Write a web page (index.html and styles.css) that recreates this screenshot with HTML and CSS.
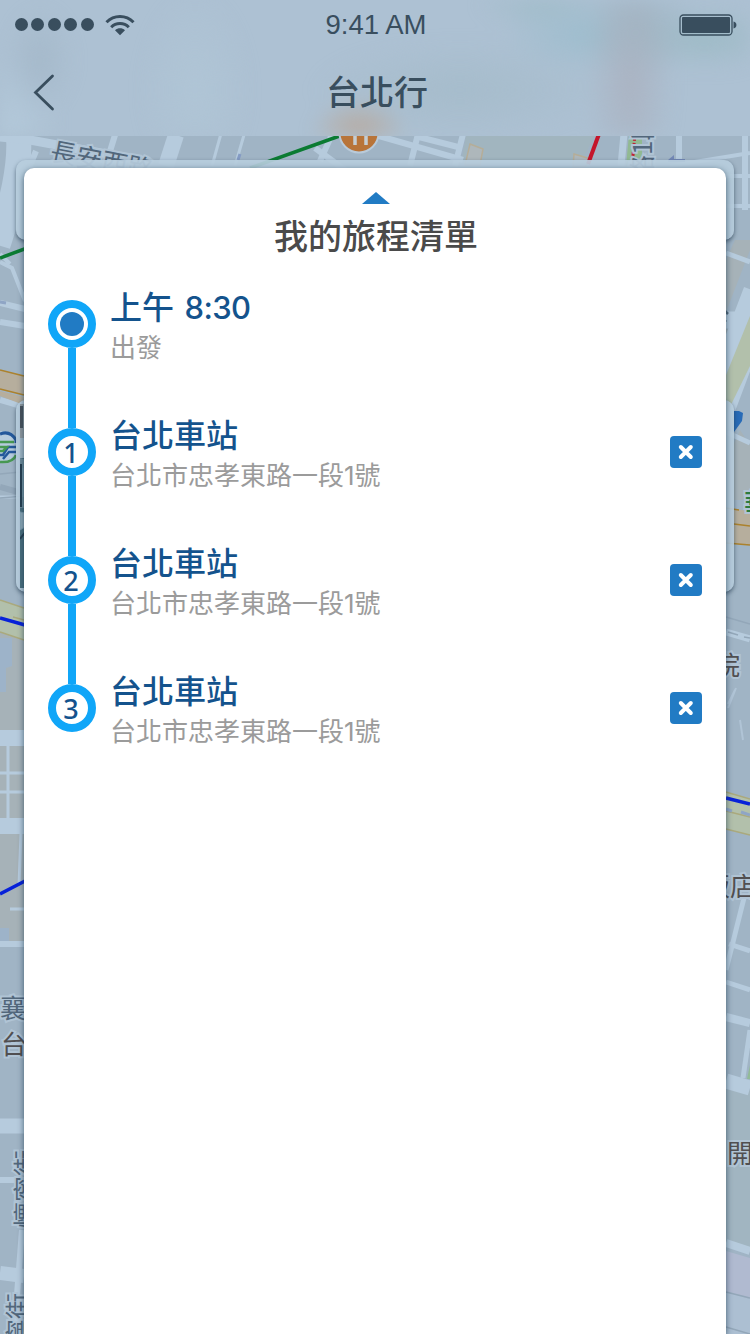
FILE: index.html
```html
<!DOCTYPE html>
<html lang="zh-Hant">
<head>
<meta charset="utf-8">
<title>台北行</title>
<link rel="stylesheet" href="styles.css">
</head>
<body>
<div class="screen">
  <svg class="map" viewBox="0 0 750 1334" aria-hidden="true">
    <rect width="750" height="1334" fill="#a0b4c5"/>
    <!-- city blocks -->
    <g fill="#a6b2b8">
      <path d="M0 630L24 637V740H0ZM0 740H24V945H0ZM726 312L750 250V240L735 240L726 260ZM726 345L736 331L726 329ZM740 430L750 445V500H726V460Z"/>
    </g>
    <path d="M466 136H594L578 170H460Z" fill="#a1b5bf"/>
    <path d="M0 638L12 638V666L6 668V692H0ZM0 928H9V945H0Z" fill="#9db3c9"/>
    <path d="M726 1075L750 1090V1247L726 1241Z" fill="#a1b5c1"/>
    <path d="M726 1251L750 1258V1299L726 1292Z" fill="#b0bad0"/>
    <path d="M726 1292L750 1299V1334H726Z" fill="#acbfd2"/>
    <!-- streets -->
    <g stroke="#b6cbdd" fill="none">
      <path d="M18 130C22 165 11 205 -2 245" stroke-width="25"/>
      <path d="M0 137L30 140L150 162" stroke-width="9"/>
      <path d="M36 151L24 180M115 135L107 161M334 130L320 161" stroke-width="6"/>
      <path d="M222 130L212 166M246 128L235 166" stroke-width="3"/>
      <path d="M418 134L410 166M463 134L455 166" stroke-width="6"/>
      <path d="M176 135L166 166" stroke-width="16"/>
      <path d="M315 148L345 170M372 134L463 160M415 136L462 148" stroke-width="6"/>
      <path d="M624 134L621 166" stroke-width="7"/>
      <path d="M679 134V160M745 134V210" stroke-width="6"/>
      <path d="M670 166L750 153M724 176H750M724 206H750" stroke-width="4"/>
      <path d="M10 264L0 254M0 262L12 268L25 301" stroke-width="4"/>
      <path d="M0 303L25 309M0 322L25 326M0 400L25 407" stroke-width="6"/>
      <path d="M0 497H24" stroke-width="3"/>
      <path d="M0 738H24M0 826H24" stroke-width="16"/>
      <path d="M8 745L8 820M21 834L19 885M10 909H24" stroke-width="3"/>
      <path d="M0 773H24M0 792H24" stroke-width="3"/>
      <path d="M0 944H24M0 1180H24" stroke-width="6"/>
      <path d="M0 1126H24" stroke-width="15"/>
      <path d="M0 1273L24 1276" stroke-width="14"/>
      <path d="M22 1230L14 1334" stroke-width="6"/>
      <path d="M726 253L750 262M726 432L750 443" stroke-width="5"/>
      <path d="M726 320H738M752 290L712 395" stroke-width="17"/>
      <path d="M750 360L720 440" stroke-width="8"/>
      <path d="M726 632L750 639" stroke-width="7"/>
      <path d="M728 708L736 688M735 690L728 704M743 740L740 720" stroke-width="2" opacity=".7"/>
      <path d="M744 898L726 970M729 944L750 951M726 982L750 990" stroke-width="5"/>
      <path d="M726 1017L750 1023" stroke-width="8"/>
      <path d="M726 1081L750 1088" stroke-width="15"/>
      <path d="M750 1030L743 1078" stroke-width="5"/>
      <path d="M726 1243L750 1251" stroke-width="8"/>
    </g>
    <g stroke="#93a7b9" stroke-width="1.5" fill="none">
      <path d="M0 474L20 472M0 498L24 496M726 617L750 624M726 1292L750 1298M726 1327L750 1334M728 632L738 635M744 637L750 638"/>
      <path d="M0 487L18 492" stroke-width="6"/>
    </g>
    <!-- main roads -->
    <path d="M0 370L24 376V395L0 390Z" fill="#b6ae9d"/>
    <path d="M0 391L24 397V405L0 396Z" fill="#b6ae9d"/>
    <path d="M0 370L24 376M0 389L24 395" stroke="#ac822d" stroke-width="1.6"/>
    <path d="M0 600L24 608V640L0 632Z" fill="#b2c0ab"/>
    <path d="M0 600L24 608M0 632L24 640M13 617L24 620" stroke="#aaa97d" stroke-width="1.5"/>
    <path d="M726 508L750 511V545L726 543Z" fill="#b6ae9d"/>
    <path d="M726 508L739 510M734 524L750 526M726 543L750 545" stroke="#ac822d" stroke-width="1.6"/>
    <path d="M726 375L750 316V366L726 415Z" fill="#b2c0ab"/>
    <path d="M726 792L750 799V835L726 829Z" fill="#b2c0ab"/>
    <path d="M726 792L750 799M726 811L750 817M726 829L750 835" stroke="#aaa97d" stroke-width="1.4"/>
    <path d="M0 302L6 303M726 809L732 811M741 812L750 815" stroke="#8fa5c5" stroke-width="3"/>
    <!-- parks and landmarks -->
    <g fill="#aeb7bb" stroke="#b5ad98" stroke-width="1.5">
      <path d="M470 144L483 149L480 165H465ZM574 154L591 159L585 167H573Z"/>
    </g>
    <path d="M629 134H642V166H626Z" fill="#91b992"/>
    <path d="M635 134L632 166" stroke="#bf2136" stroke-width="3" stroke-dasharray="7 2"/>
    <path d="M668 160L674 155V159H685V162H668Z" fill="#7388b5"/>
    <path d="M238 160L240 154" stroke="#849bc4" stroke-width="3"/>
    <path d="M734 411H739L743 413L742 421L734 432Z" fill="#286bb7"/>
    <path d="M750 1065L747 1079H750Z" fill="#92bb98"/>
    <path d="M725 311L728 314M726 320L724 322" stroke="#536878" stroke-width="2.5"/>
    <!-- rail station mark -->
    <g fill="none">
      <ellipse cx="3" cy="447" rx="15" ry="16" fill="#b6cbdd"/>
      <path d="M0 434Q10 430 16 440V443" stroke="#24589b" stroke-width="3"/>
      <path d="M0 455H3L8 447H16M3 459L9 452H16" stroke="#24589b" stroke-width="2.5"/>
      <path d="M0 442H14M0 447H7L3 451H0M0 462Q13 463 16 455" stroke="#479852" stroke-width="2.5"/>
    </g>
    <!-- transit lines -->
    <g fill="none" stroke-width="3.5">
      <path d="M0 258L38 244M250 168L345 134" stroke="#0b7b32"/>
      <path d="M599 134L588 164" stroke="#c4152b" stroke-width="4"/>
      <path d="M0 618L25 625M0 894L25 881M726 798L750 804" stroke="#0721d9"/>
    </g>
    <circle cx="359" cy="133" r="19.5" fill="#b87439" stroke="#b9cad9" stroke-width="2"/>
    <path d="M355 134V145M366 134V145" stroke="#c5cdd2" stroke-width="3.5"/>
    <!-- place names -->
    <g class="place place-street">
      <text x="49" y="160" transform="rotate(11 49 160)">長安西路</text>
      <text x="652" y="181" transform="rotate(-90 652 181)">路1段</text>
      <text x="0" y="1018">襄</text>
      <text x="36" y="1228" transform="rotate(-90 36 1228)">懷寧街</text>
      <text x="28" y="1371" transform="rotate(-90 28 1371)">懷寧街</text>
    </g>
    <g class="place">
      <text x="1" y="1054">台</text>
      <text x="714" y="675">院</text>
      <text x="704" y="896">飯店</text>
      <text x="727" y="1163">開</text>
    </g>
    <text class="place place-green" x="744" y="513">華</text>
  </svg>

  <div class="under-card under-card-top"></div>
  <div class="under-card under-card-photo">
    <svg viewBox="0 0 694 184" class="photo" preserveAspectRatio="none">
      <rect width="694" height="184" fill="#4b707f"/>
      <path d="M0 0H10V34H0Z" fill="#929ba1"/><path d="M0 2H3V24H0Z" fill="#4a535c"/>
      <path d="M0 34H10V54H0Z" fill="#a3bac8"/><path d="M0 54L10 57V104H0Z" fill="#6f8d9c"/>
      <path d="M1 60V103M7 55V100M0 135L10 122" stroke="#263f50" stroke-width="2"/>
      <path d="M3 64V93M0 108L10 110V120L0 126Z" stroke="#7d9cad" fill="#91acbb"/>
    </svg>
  </div>

  <header class="header">
    <div class="tint" aria-hidden="true"></div>
    <div class="status">
      <div class="status-left">
        <i class="dot"></i><i class="dot"></i><i class="dot"></i><i class="dot"></i><i class="dot"></i>
        <svg class="wifi" viewBox="0 0 30 22">
          <g fill="none" stroke="#394e5e" stroke-width="3">
            <path d="M1.5 8.3C9 0.7 21 0.7 28.5 8.3M6.2 13.2C11 8.3 19 8.3 23.8 13.2"/>
          </g>
          <path d="M10 16.2C13 13.6 17 13.6 20 16.2L15 21.2Z" fill="#394e5e"/>
        </svg>
      </div>
      <time class="clock">9:41 AM</time>
      <svg class="battery" viewBox="0 0 58 22">
        <rect x="1" y="1" width="52" height="20" rx="3.5" fill="none" stroke="#394e5e" stroke-width="1.3"/>
        <rect x="3" y="3" width="48" height="16" rx="1" fill="#394e5e"/>
        <path d="M54.5 7.5C58.4 8 58.4 14 54.5 14.5Z" fill="#394e5e"/>
      </svg>
    </div>
    <nav class="nav">
      <svg class="back" viewBox="0 0 22 38"><path d="M19.5 2L2.5 18.5L19.5 35" fill="none" stroke="#394e5e" stroke-width="2.8" stroke-linecap="round" stroke-linejoin="miter"/></svg>
      <h1 class="page-title">台北行</h1>
    </nav>
  </header>

  <main class="card">
    <div class="caret"></div>
    <h2 class="card-title">我的旅程清單</h2>
    <ol class="stops">
      <li class="stop">
        <div class="rail"><span class="seg"></span><span class="node"><span class="start"></span></span><span class="seg line"></span></div>
        <div class="info"><div class="name">上午 <span class="time">8:30</span></div><div class="detail">出發</div></div>
      </li>
      <li class="stop">
        <div class="rail"><span class="seg line"></span><span class="node">1</span><span class="seg line"></span></div>
        <div class="info"><div class="name">台北車站</div><div class="detail">台北市忠孝東路一段1號</div></div>
        <button class="remove" aria-label="移除"><svg viewBox="0 0 32 32"><path d="M10.8 11L20.8 21M20.8 11L10.8 21"/></svg></button>
      </li>
      <li class="stop">
        <div class="rail"><span class="seg line"></span><span class="node">2</span><span class="seg line"></span></div>
        <div class="info"><div class="name">台北車站</div><div class="detail">台北市忠孝東路一段1號</div></div>
        <button class="remove" aria-label="移除"><svg viewBox="0 0 32 32"><path d="M10.8 11L20.8 21M20.8 11L10.8 21"/></svg></button>
      </li>
      <li class="stop">
        <div class="rail"><span class="seg line"></span><span class="node">3</span><span class="seg"></span></div>
        <div class="info"><div class="name">台北車站</div><div class="detail">台北市忠孝東路一段1號</div></div>
        <button class="remove" aria-label="移除"><svg viewBox="0 0 32 32"><path d="M10.8 11L20.8 21M20.8 11L10.8 21"/></svg></button>
      </li>
    </ol>
  </main>
</div>
</body>
</html>
```
FILE: styles.css
```css
* { box-sizing: border-box; }
body { margin: 0; }
.screen {
  position: relative;
  display: flex;
  flex-direction: column;
  width: 750px;
  height: 1334px;
  overflow: hidden;
  font-family: Inter, "Noto Sans CJK TC", sans-serif;
}
.map { position: absolute; inset: 0; width: 750px; height: 1334px; }
.place {
  font: 400 26px "Noto Sans CJK TC", sans-serif;
  fill: #514f51;
  stroke: #b0c4d5;
  stroke-width: 4px;
  paint-order: stroke;
}
.place-street { fill: #52677b; }
.place-green { fill: #2c7b3f; font-weight: 500; }

/* sheets lying behind the itinerary */
.under-card {
  position: absolute;
  left: 16px;
  width: 718px;
  border-radius: 10px;
  background: rgba(183, 204, 221, .93);
  box-shadow: 0 2px 4px rgba(25, 49, 68, .6);
}
.under-card-top { top: 160px; height: 80px; }
.under-card-photo { top: 400px; height: 192px; padding: 4px; }
.photo { display: block; width: 694px; height: 184px; }

.header {
  position: relative;
  flex: none;
  height: 136px;
  overflow: hidden;
  color: #394e5e;
  background: #adc1d3;
}
/* soft colour of the map seen through the frosted bar */
.tint {
  position: absolute;
  inset: 0;
  filter: blur(8px);
  background:
    radial-gradient(ellipse 50px 40px at 359px 136px, rgba(186, 165, 148, .9), transparent),
    radial-gradient(ellipse 45px 120px at 630px 85px, rgba(170, 176, 190, .8), transparent),
    radial-gradient(ellipse 55px 60px at 640px 25px, rgba(158, 180, 194, .8), transparent),
    radial-gradient(ellipse 90px 34px at 705px 38px, rgba(154, 185, 195, .8), transparent),
    radial-gradient(ellipse 85px 40px at 588px 35px, rgba(154, 188, 204, .8), transparent),
    radial-gradient(ellipse 65px 30px at 540px 0, rgba(157, 187, 198, .8), transparent),
    radial-gradient(ellipse 150px 50px at 460px 90px, rgba(163, 186, 200, .7), transparent),
    radial-gradient(ellipse 35px 55px at 40px 60px, rgba(163, 183, 200, .8), transparent),
    radial-gradient(ellipse 55px 100px at 195px 90px, rgba(177, 199, 215, .7), transparent),
    radial-gradient(ellipse 50px 70px at 10px 125px, rgba(180, 202, 219, .8), transparent);
}
.status {
  position: relative;
  display: grid;
  grid-template-columns: 1fr auto 1fr;
  align-items: center;
  height: 48px;
  padding: 0 13px 0 15px;
}
.status-left { display: flex; align-items: center; gap: 3.4px; }
.dot { width: 13px; height: 13px; border-radius: 50%; background: #394e5e; }
.wifi { width: 30px; height: 22px; margin-left: 8px; }
.clock {
  padding-top: 1px;
  font-family: "Liberation Sans", sans-serif;
  font-size: 27.5px;
  line-height: 48px;
}
.battery { width: 58px; height: 22px; justify-self: end; }
.nav {
  position: relative;
  display: grid;
  grid-template-columns: 22px 1fr 22px;
  align-items: center;
  height: 88px;
  padding: 2px 31px 0 33px;
}
.back { width: 22px; height: 38px; }
.page-title {
  margin: 0;
  padding-left: 2px;
  font-size: 34px;
  font-weight: 500;
  line-height: 48px;
  text-align: center;
}

.card {
  position: relative;
  display: flex;
  flex-direction: column;
  align-items: center;
  flex: 1;
  margin: 32px 24px 0;
  padding-top: 24px;
  border-radius: 10px 10px 0 0;
  background: #fff;
  box-shadow: 0 2px 6px rgba(20, 48, 70, .7);
}
.caret {
  width: 28px;
  height: 12px;
  margin-left: 2px;
  background: #217bc4;
  clip-path: polygon(50% 0, 100% 100%, 0 100%);
}
.card-title {
  margin: 9px 0 23px;
  padding-left: 2px;
  font-size: 34px;
  font-weight: 500;
  line-height: 48px;
  color: #4a4a4a;
}
.stops {
  align-self: stretch;
  margin: 0;
  padding: 0 24px;
  list-style: none;
}
.stop { display: flex; height: 128px; }
.rail {
  display: grid;
  grid-template-rows: 16px 48px 64px;
  justify-items: center;
  width: 48px;
}
.seg { width: 8px; }
.line { background: #10a6f8; }
.node {
  display: grid;
  place-items: center;
  width: 48px;
  height: 48px;
  padding: 1px 2px 0 0;
  border: 8px solid #10a6f8;
  border-radius: 50%;
  font-family: "Noto Sans", sans-serif;
  font-size: 27px;
  font-weight: 500;
  line-height: 30px;
  color: #14538d;
}
.node:has(.start) { padding: 0; }
.start { width: 24px; height: 24px; border-radius: 50%; background: #217bc4; }
.info { flex: 1; padding: 2px 0 0 14px; }
.name { font-size: 32px; font-weight: 500; line-height: 44px; color: #14538d; }
.time { margin-left: 2px; font-size: 31px; letter-spacing: -.6px; }
.detail { font-size: 26px; line-height: 36px; color: #9b9b9b; }
.remove {
  width: 32px;
  height: 32px;
  margin: 24px 0 0;
  padding: 0;
  border: 0;
  border-radius: 4px;
  background: #217bc4;
}
.remove svg { display: block; width: 32px; height: 32px; }
.remove path { fill: none; stroke: #fff; stroke-width: 4; stroke-linecap: round; }
```
